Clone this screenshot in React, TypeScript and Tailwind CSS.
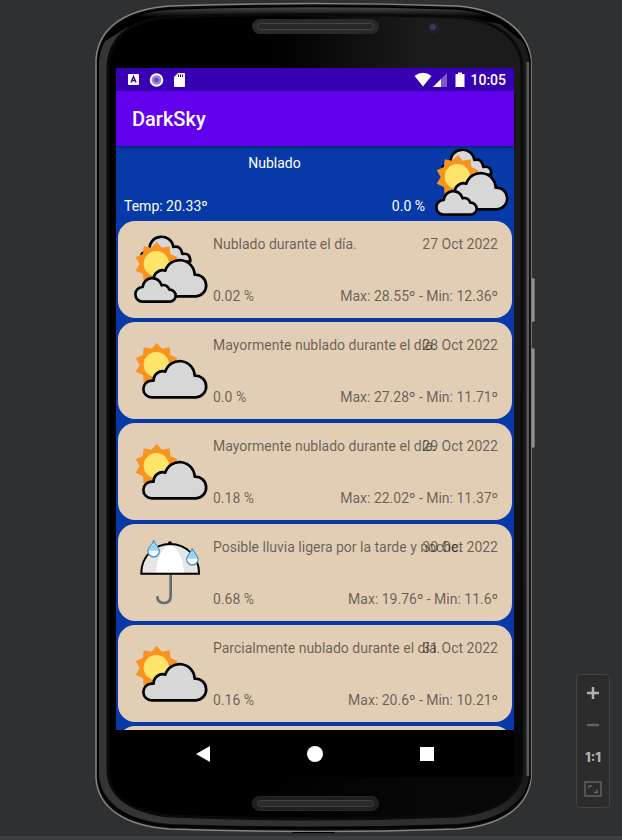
import React from "react";

type Sky = "cloudy" | "partly" | "rain";

interface Day {
  sky: Sky;
  summary: string;
  date: string;
  rain: string;
  range: string;
}

const days: Day[] = [
  { sky: "cloudy", summary: "Nublado durante el día.", date: "27 Oct 2022", rain: "0.02 %", range: "Max: 28.55º - Min: 12.36º" },
  { sky: "partly", summary: "Mayormente nublado durante el día.", date: "28 Oct 2022", rain: "0.0 %", range: "Max: 27.28º - Min: 11.71º" },
  { sky: "partly", summary: "Mayormente nublado durante el día.", date: "29 Oct 2022", rain: "0.18 %", range: "Max: 22.02º - Min: 11.37º" },
  { sky: "rain", summary: "Posible lluvia ligera por la tarde y noche.", date: "30 Oct 2022", rain: "0.68 %", range: "Max: 19.76º - Min: 11.6º" },
  { sky: "partly", summary: "Parcialmente nublado durante el día.", date: "31 Oct 2022", rain: "0.16 %", range: "Max: 20.6º - Min: 10.21º" },
];

// Ten-pointed sun centred on (140, 372)
const sunPoints = Array.from({ length: 20 }, (_, i) => {
  const r = i % 2 === 0 ? 66 : 51;
  const a = (i * Math.PI) / 10 - Math.PI / 2;
  return `${(140 + r * Math.cos(a)).toFixed(1)},${(372 + r * Math.sin(a)).toFixed(1)}`;
}).join(" ");

function Sun() {
  return (
    <>
      <polygon points={sunPoints} fill="#f7931e" />
      <circle cx="139" cy="371" r="38" fill="#ffe66b" />
    </>
  );
}

function MainCloud() {
  return (
    <path d="M125 469H258A32.500 32.500 0 0 0 254 404A45 45 0 0 0 166 392A27 27 0 0 0 131 419H125A25 25 0 0 0 125 469Z" />
  );
}

function SkyIcon({ sky }: { sky: Sky }) {
  if (sky === "rain") {
    return (
      <svg className="h-[70px] w-[76px] shrink-0" viewBox="69 63 228 210" aria-hidden="true">
        <path d="M182 176V240Q182 261 162 261Q142 261 142 241" fill="none" stroke="#6b6b6b" strokeWidth="8" />
        <path d="M94 173V170A86.500 86 0 0 1 267 170V173Z" fill="#e6e6e6" />
        <path d="M138 171C140 125 155 98 180 85C205 98 220 125 222 171Z" fill="#fff" />
        <path d="M94 173V170A86.500 86 0 0 1 267 170V173Z" fill="none" stroke="#000" strokeWidth="6" />
        <circle cx="180" cy="82" r="6" />
        <g stroke="#4a94c8" strokeWidth="4">
          <path d="M131 73C128 88 114 93 114 106A17 17 0 0 0 148 106C148 93 134 88 131 73Z" fill="#fff" />
          <path d="M247 97C244 112 230 117 230 130A17 17 0 0 0 264 130C264 117 250 112 247 97Z" fill="#fff" />
        </g>
        <path d="M131 78C129 90 117 95 117 104H145C145 95 133 90 131 78Z" fill="#97d5f8" />
        <path d="M247 102C245 114 233 119 233 128H261C261 119 249 114 247 102Z" fill="#97d5f8" />
      </svg>
    );
  }
  return (
    <svg className="h-[70px] w-[76px] shrink-0" viewBox="69 282 228 210" aria-hidden="true">
      <g fill="#d7d7d7" stroke="#000" strokeWidth="8" strokeLinejoin="round">
        {sky === "cloudy" && (
          <path d="M95 366V342Q103 333 119 330C115 282 183 276 190 321Q212 315 217 342Q241 337 241 364Z" />
        )}
      </g>
      <Sun />
      <g fill="#d7d7d7" stroke="#000" strokeWidth="8" strokeLinejoin="round">
        <MainCloud />
        {sky === "cloudy" && (
          <path d="M98 485H180A18 18 0 0 0 178 449A18 18 0 0 0 155 436A29 29 0 0 0 98 441A22 22 0 0 0 98 485Z" />
        )}
      </g>
    </svg>
  );
}

function DeviceBody() {
  return (
    <svg
      className="pointer-events-none absolute inset-0 h-full w-full overflow-visible"
      viewBox="95 2 437 832"
      preserveAspectRatio="none"
      aria-hidden="true"
    >
      <defs>
        <linearGradient id="band" x1="0" x2="1" y1="0" y2="0">
          <stop offset="0" stopColor="#353535" />
          <stop offset="0.9" stopColor="#2c2c2c" />
          <stop offset="1" stopColor="#1a1a1a" />
        </linearGradient>
        <linearGradient id="rimTop" x1="0" x2="0" y1="4" y2="17" gradientUnits="userSpaceOnUse">
          <stop offset="0" stopColor="#606060" />
          <stop offset="0.5" stopColor="#303030" />
          <stop offset="1" stopColor="#000" />
        </linearGradient>
        <linearGradient id="glass" x1="0" x2="1" y1="0" y2="0">
          <stop offset="0.4" stopColor="#000" />
          <stop offset="0.75" stopColor="#1b1b1b" />
          <stop offset="1" stopColor="#1b1b1b" />
        </linearGradient>
        <linearGradient id="glassFade" x1="0" x2="0" y1="0" y2="1">
          <stop offset="0.3" stopColor="#000" stopOpacity="0" />
          <stop offset="0.9" stopColor="#000" stopOpacity="0.75" />
        </linearGradient>
      </defs>
      <path d="M532 279H534V321H532ZM532 349H534V447H532Z" fill="#777" stroke="#aaa" strokeWidth="1" />
      <path
        d="M96 60C98 26 128 9 170 6Q313 1 457 6C500 9 528 30 531 60V778C528 808 500 826 457 829Q313 834 170 829C125 826 98 808 96 778Z"
        fill="#0c0c0c"
        stroke="#858585"
        strokeWidth="1.500"
      />
      <path
        d="M103 63C105 33 130 16 170 13Q313 8 457 13C496 16 523 34 526 63V775C523 800 497 817 457 820Q313 825 170 820C129 817 105 800 103 775Z"
        fill="none"
        stroke="url(#band)"
        strokeWidth="8"
      />
      <path d="M104 42C116 20 140 11 170 9Q313 4 457 9C485 11 512 22 523 42L500 24Q460 16 313 15Q160 16 126 28Z" fill="url(#rimTop)" />
      <path d="M528 62V776" stroke="#5a5a5a" strokeWidth="3" />
      <path
        d="M98 60C100 29 129 12 170 9Q313 4 457 9C498 12 526 32 530 60V778C526 804 498 823 457 826Q313 830 170 826C127 823 100 804 98 778Z"
        fill="none"
        stroke="#000"
        strokeWidth="1.500"
      />
      <path
        d="M108 66C110 36 130 20 170 17Q313 12 457 17C495 20 520 37 522 66V772C520 796 496 812 457 816Q313 822 170 816C130 812 110 796 108 772Z"
        fill="url(#glass)"
      />
      <path
        d="M108 66C110 36 130 20 170 17Q313 12 457 17C495 20 520 37 522 66V772C520 796 496 812 457 816Q313 822 170 816C130 812 110 796 108 772Z"
        fill="url(#glassFade)"
        stroke="#0a0a0a"
        strokeWidth="3"
      />
      <g stroke="#282828" strokeWidth="1">
        <rect x="252.500" y="19.500" width="126" height="14" rx="7" fill="#2a2a2a" />
        <rect x="257.500" y="23.500" width="116" height="6" rx="3" fill="#262626" stroke="#454545" />
        <rect x="252.500" y="796.500" width="126" height="14" rx="7" fill="#1f1f1f" />
        <rect x="257.500" y="800.500" width="116" height="6" rx="3" fill="#2a2a2a" stroke="#404040" />
      </g>
      <circle cx="434" cy="28" r="6" fill="#20212a" />
      <circle cx="433" cy="27" r="3" fill="#323a5e" />
      <path d="M293 834V832.500H334V834" fill="none" stroke="#000" strokeWidth="1" />
    </svg>
  );
}

function StatusBar() {
  return (
    <div className="flex h-[23px] shrink-0 items-center justify-between bg-[#3700b3] pr-2 pl-3 text-white">
      <svg className="h-4 w-[58px]" viewBox="0 0 58 16" aria-label="Notificaciones">
        <rect x="0" y="2" width="11" height="11" rx="1" fill="#fff" />
        <path d="M3 10.500L5.500 4.500L8 10.500M4 8.500H7" fill="none" stroke="#3700b3" strokeWidth="1.400" />
        <circle cx="28.500" cy="8" r="5.800" fill="#9c80d8" stroke="#fff" strokeWidth="2" />
        <circle cx="28.500" cy="8" r="2.300" fill="#6a42c4" />
        <path d="M50 1H56Q57 1 57 2V14Q57 15 56 15H47Q46 15 46 14V5Z" fill="#fff" />
        <path d="M50.500 2.500V5M52.500 2.500V5M54.500 2.500V5" stroke="#3700b3" strokeWidth="1" />
      </svg>
      <div className="flex items-center gap-1">
        <svg className="h-4 w-[52px]" viewBox="0 0 52 16" aria-label="Wifi, señal y batería">
          <path d="M0.500 4Q9 -2.500 17.500 4L9 14.500Z" fill="#fff" />
          <path d="M33 1V15H19Z" fill="#fff" fillOpacity="0.35" />
          <path d="M27 7V15H19Z" fill="#fff" />
          <path d="M44 0.500H48V2H50.500V15H41.500V2H44Z" fill="#fff" />
        </svg>
        <span className="text-[14px] leading-5 font-medium">10:05</span>
      </div>
    </div>
  );
}

function DayCard({ day }: { day: Day }) {
  return (
    <li className="flex h-[97px] shrink-0 rounded-[17px] bg-[#e2ceb5] pt-[13px] pr-[14px] pb-3 pl-[15px] text-black/55">
      <SkyIcon sky={day.sky} />
      <div className="ml-1 flex min-w-0 flex-1 flex-col justify-between whitespace-nowrap">
        <div className="grid">
          <span className="col-start-1 row-start-1">{day.summary}</span>
          <time className="col-start-1 row-start-1 justify-self-end">{day.date}</time>
        </div>
        <div className="flex justify-between">
          <span>{day.rain}</span>
          <span>{day.range}</span>
        </div>
      </div>
    </li>
  );
}

function NavBar() {
  return (
    <nav className="flex h-[47px] shrink-0 justify-center bg-black">
      <button type="button" aria-label="Atrás" className="flex w-28 items-center justify-center">
        <svg className="size-4" viewBox="0 0 16 16"><path d="M1 8L15 0V16Z" fill="#fff" /></svg>
      </button>
      <button type="button" aria-label="Inicio" className="flex w-28 items-center justify-center">
        <span className="size-4 rounded-full bg-white" />
      </button>
      <button type="button" aria-label="Recientes" className="flex w-28 items-center justify-center">
        <span className="size-[14px] bg-white" />
      </button>
    </nav>
  );
}

function ZoomControls() {
  return (
    <div className="absolute right-3 bottom-8 flex w-[34px] flex-col items-center rounded-[4px] border border-[#414344] bg-[#2b2b2b] py-[2px] text-[#afb1b3]">
      <button type="button" aria-label="Acercar" className="flex h-8 w-full items-center justify-center">
        <svg className="size-4" viewBox="0 0 16 16"><path d="M8 2V14M2 8H14" stroke="currentColor" strokeWidth="2.500" /></svg>
      </button>
      <button type="button" aria-label="Alejar" disabled className="flex h-8 w-full items-center justify-center text-[#626364]">
        <svg className="size-4" viewBox="0 0 16 16"><path d="M2 8H14" stroke="currentColor" strokeWidth="2.500" /></svg>
      </button>
      <button type="button" className="flex h-8 w-full items-center justify-center font-['Inter',sans-serif] text-[13px] font-extrabold">
        1:1
      </button>
      <button type="button" aria-label="Ajustar" disabled className="flex h-8 w-full items-center justify-center text-[#626364]">
        <svg className="h-4 w-[18px]" viewBox="0 0 18 16" fill="none" stroke="currentColor">
          <rect x="1" y="1" width="16" height="14" strokeWidth="1.500" />
          <path d="M5 7.500V5H8M10 11.500H13V8.500" strokeWidth="1.500" />
        </svg>
      </button>
    </div>
  );
}

export default function App() {
  return (
    <div className="relative flex h-screen min-h-[480px] flex-col bg-[#2f3032] font-['Roboto',sans-serif] text-[14px] leading-5">
      <main className="flex min-h-0 flex-1 justify-center pt-[2px] pb-[2px] pl-[5px]">
        <div className="relative flex w-full max-w-[437px] flex-col pt-[66px] pr-[18px] pb-[57px] pl-[21px]">
          <DeviceBody />
          <div className="relative flex min-h-0 flex-1 flex-col bg-[#0839a9]">
            <StatusBar />
            <header className="relative flex h-[55px] shrink-0 items-center bg-[#6200ee] px-4 shadow-[0_1px_3px_rgba(0,0,0,0.5)]">
              <h1 className="text-[20px] leading-6 font-medium text-white">DarkSky</h1>
            </header>
            <section className="flex h-[75px] shrink-0 justify-between gap-[9px] pt-px pr-1 pl-2 text-white">
              <div className="flex flex-1 flex-col justify-between pt-[6px] pb-[5px]">
                <p className="text-center">Nublado</p>
                <div className="flex justify-between">
                  <span>Temp: 20.33º</span>
                  <span>0.0 %</span>
                </div>
              </div>
              <SkyIcon sky="cloudy" />
            </section>
            <ul className="flex min-h-0 flex-1 flex-col gap-1 overflow-hidden px-[2px]">
              {days.map((day) => (
                <DayCard key={day.date} day={day} />
              ))}
              <li aria-hidden="true" className="h-[97px] shrink-0 rounded-[17px] bg-[#e2ceb5]" />
            </ul>
            <NavBar />
          </div>
        </div>
      </main>
      <footer className="h-1 shrink-0 bg-[#3c3f41]" />
      <ZoomControls />
    </div>
  );
}
